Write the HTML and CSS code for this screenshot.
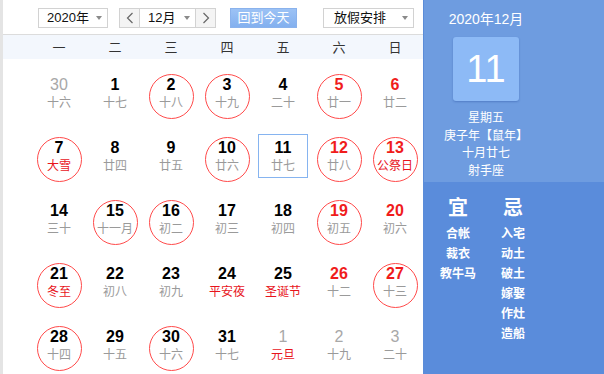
FILE: index.html
```html
<!DOCTYPE html>
<html lang="zh-CN">
<head>
<meta charset="utf-8">
<title>万年历</title>
<link rel="stylesheet" href="styles.css">
</head>
<body>
<div class="app">
  <div class="cal">
    <div class="toolbar">
      <div class="select year"><span>2020年</span><i class="caret"></i></div>
      <div class="month-group">
        <div class="nav"><svg width="8" height="12" viewBox="0 0 8 12"><polyline points="6.5,1 1.5,6 6.5,11" fill="none" stroke="#666" stroke-width="1.2"/></svg></div>
        <div class="select month"><span>12月</span><i class="caret"></i></div>
        <div class="nav"><svg width="8" height="12" viewBox="0 0 8 12"><polyline points="1.5,1 6.5,6 1.5,11" fill="none" stroke="#666" stroke-width="1.2"/></svg></div>
      </div>
      <div class="btn-today">回到今天</div>
      <div class="select holiday"><span>放假安排</span><i class="caret"></i></div>
    </div>
    <div class="week">
      <div>一</div><div>二</div><div>三</div><div>四</div><div>五</div><div>六</div><div>日</div>
    </div>
    <div class="grid">
      <div class="cell"><div class="day"><span class="num gray">30</span><span class="lunar">十六</span></div></div>
      <div class="cell"><div class="day"><span class="num">1</span><span class="lunar">十七</span></div></div>
      <div class="cell"><div class="day circle"><span class="num">2</span><span class="lunar">十八</span></div></div>
      <div class="cell"><div class="day circle"><span class="num">3</span><span class="lunar">十九</span></div></div>
      <div class="cell"><div class="day"><span class="num">4</span><span class="lunar">二十</span></div></div>
      <div class="cell"><div class="day circle"><span class="num red">5</span><span class="lunar">廿一</span></div></div>
      <div class="cell"><div class="day"><span class="num red">6</span><span class="lunar">廿二</span></div></div>

      <div class="cell"><div class="day circle"><span class="num">7</span><span class="lunar red">大雪</span></div></div>
      <div class="cell"><div class="day"><span class="num">8</span><span class="lunar">廿四</span></div></div>
      <div class="cell"><div class="day"><span class="num">9</span><span class="lunar">廿五</span></div></div>
      <div class="cell"><div class="day circle"><span class="num">10</span><span class="lunar">廿六</span></div></div>
      <div class="cell"><div class="day today"><span class="num">11</span><span class="lunar">廿七</span></div></div>
      <div class="cell"><div class="day circle"><span class="num red">12</span><span class="lunar">廿八</span></div></div>
      <div class="cell"><div class="day circle"><span class="num red">13</span><span class="lunar red">公祭日</span></div></div>

      <div class="cell"><div class="day"><span class="num">14</span><span class="lunar">三十</span></div></div>
      <div class="cell"><div class="day circle"><span class="num">15</span><span class="lunar">十一月</span></div></div>
      <div class="cell"><div class="day circle"><span class="num">16</span><span class="lunar">初二</span></div></div>
      <div class="cell"><div class="day"><span class="num">17</span><span class="lunar">初三</span></div></div>
      <div class="cell"><div class="day"><span class="num">18</span><span class="lunar">初四</span></div></div>
      <div class="cell"><div class="day circle"><span class="num red">19</span><span class="lunar">初五</span></div></div>
      <div class="cell"><div class="day"><span class="num red">20</span><span class="lunar">初六</span></div></div>

      <div class="cell"><div class="day circle"><span class="num">21</span><span class="lunar red">冬至</span></div></div>
      <div class="cell"><div class="day"><span class="num">22</span><span class="lunar">初八</span></div></div>
      <div class="cell"><div class="day"><span class="num">23</span><span class="lunar">初九</span></div></div>
      <div class="cell"><div class="day"><span class="num">24</span><span class="lunar red">平安夜</span></div></div>
      <div class="cell"><div class="day"><span class="num">25</span><span class="lunar red">圣诞节</span></div></div>
      <div class="cell"><div class="day"><span class="num red">26</span><span class="lunar">十二</span></div></div>
      <div class="cell"><div class="day circle"><span class="num red">27</span><span class="lunar">十三</span></div></div>

      <div class="cell"><div class="day circle"><span class="num">28</span><span class="lunar">十四</span></div></div>
      <div class="cell"><div class="day"><span class="num">29</span><span class="lunar">十五</span></div></div>
      <div class="cell"><div class="day circle"><span class="num">30</span><span class="lunar">十六</span></div></div>
      <div class="cell"><div class="day"><span class="num">31</span><span class="lunar">十七</span></div></div>
      <div class="cell"><div class="day"><span class="num gray">1</span><span class="lunar red">元旦</span></div></div>
      <div class="cell"><div class="day"><span class="num gray">2</span><span class="lunar">十九</span></div></div>
      <div class="cell"><div class="day"><span class="num gray">3</span><span class="lunar">二十</span></div></div>
    </div>
  </div>
  <div class="side">
    <div class="side-top">
      <div class="ym">2020年12月</div>
      <div class="bigday">11</div>
      <div class="info">
        <div>星期五</div>
        <div>庚子年【鼠年】</div>
        <div>十月廿七</div>
        <div>射手座</div>
      </div>
    </div>
    <div class="side-bottom">
      <div class="col">
        <div class="yj-title">宜</div>
        <div>合帐</div>
        <div>裁衣</div>
        <div>教牛马</div>
      </div>
      <div class="col">
        <div class="yj-title">忌</div>
        <div>入宅</div>
        <div>动土</div>
        <div>破土</div>
        <div>嫁娶</div>
        <div>作灶</div>
        <div>造船</div>
      </div>
    </div>
  </div>
</div>
</body>
</html>
```

FILE: styles.css
```css
* { box-sizing: border-box; }
html, body { margin: 0; padding: 0; }
body {
  width: 604px;
  height: 374px;
  overflow: hidden;
  background: #fff;
  font-family: "Liberation Sans", "Noto Sans CJK SC", sans-serif;
  color: #000;
}
.app {
  display: flex;
  width: 604px;
  height: 374px;
}
.cal {
  width: 423px;
  height: 374px;
  border-left: 3px solid #e4e4e4;
  display: flex;
  flex-direction: column;
}
.toolbar {
  height: 38px;
  border-bottom: 1px solid #dcdcdc;
  display: flex;
  align-items: flex-start;
  padding: 8px 0 0 35px;
  font-size: 13px;
  font-family: "Liberation Sans", "Noto Sans CJK SC", sans-serif;
}
.select {
  height: 20px;
  border: 1px solid #d2d2d2;
  background: #fff;
  display: flex;
  align-items: center;
  justify-content: space-between;
  padding: 0 5px 0 8px;
  color: #111;
}
.select span { line-height: 18px; }
.caret {
  width: 0;
  height: 0;
  border-left: 3.5px solid transparent;
  border-right: 3.5px solid transparent;
  border-top: 4px solid #8a8a8a;
}
.year { width: 70px; }
.month-group {
  display: flex;
  margin-left: 11px;
}
.nav {
  width: 21px;
  height: 20px;
  border: 1px solid #d2d2d2;
  background: #f4f4f4;
  display: flex;
  align-items: center;
  justify-content: center;
}
.month {
  width: 55px;
  border-left: none;
  border-right: none;
}
.btn-today {
  margin-left: 14px;
  width: 67px;
  height: 20px;
  line-height: 18px;
  text-align: center;
  color: #fff;
  border: 1px solid #8ab2ec;
  background: linear-gradient(#9cc2f5, #83b0ef);
}
.holiday {
  margin-left: 26px;
  width: 91px;
  padding-left: 10px;
}
.week {
  height: 24px;
  background: #f3f7fd;
  display: grid;
  grid-template-columns: repeat(7, 56px);
  padding-left: 28px;
  font-size: 13px;
  color: #333;
  font-family: "Noto Sans CJK SC", sans-serif;
}
.week div {
  text-align: center;
  line-height: 24px;
}
.grid {
  display: grid;
  grid-template-columns: repeat(7, 56px);
  grid-auto-rows: 63px;
  padding-left: 28px;
}
.cell {
  display: flex;
  flex-direction: column;
  align-items: center;
}
.day {
  margin-top: 15px;
  width: 45px;
  height: 45px;
  border: 1px solid transparent;
  border-radius: 50%;
  display: flex;
  flex-direction: column;
  align-items: center;
  padding-top: 1px;
}
.day.circle { border-color: #ff4a4a; }
.day.today {
  margin-top: 12px;
  width: 50px;
  height: 44px;
  border-radius: 0;
  border-color: #86b4f0;
  padding-top: 4px;
}
.num {
  font-family: "Liberation Sans", sans-serif;
  font-weight: bold;
  font-size: 16px;
  line-height: 18px;
  color: #000;
}
.num.red { color: #f01c1c; }
.num.gray { color: #a8a8a8; font-weight: normal; }
.lunar {
  font-family: "Noto Sans CJK SC", sans-serif;
  font-size: 12px;
  line-height: 16px;
  color: #9a9a9a;
  white-space: nowrap;
}
.lunar.red { color: #e8141c; }

.side {
  width: 181px;
  height: 374px;
  border-left: 1px solid #5b8cd8;
  display: flex;
  flex-direction: column;
  color: #fff;
  font-family: "Noto Sans CJK SC", sans-serif;
}
.side-top {
  height: 182px;
  background: #6e9ce0;
  width: 100%;
  display: flex;
  flex-direction: column;
  align-items: center;
  padding-right: 56px;
}
.ym {
  margin-top: 9px;
  font-size: 14px;
  line-height: 20px;
  font-family: "Liberation Sans", "Noto Sans CJK SC", sans-serif;
}
.bigday {
  margin-top: 8px;
  width: 66px;
  height: 64px;
  background: #8dbaf6;
  border-radius: 3px;
  box-shadow: 0 1px 2px rgba(30, 70, 150, 0.35);
  font-family: "Liberation Sans", sans-serif;
  font-size: 38px;
  line-height: 64px;
  text-align: center;
}
.info {
  margin-top: 7px;
  font-size: 12px;
  line-height: 17.5px;
  text-align: center;
}
.side-bottom {
  flex: 1;
  background: #5a8cdb;
  display: flex;
  padding: 13px 0 0 9px;
  gap: 5px;
}
.col {
  width: 50px;
  display: flex;
  flex-direction: column;
  align-items: center;
  font-size: 12px;
  font-weight: bold;
  line-height: 20px;
}
.yj-title {
  font-size: 20px;
  line-height: 24px;
  font-weight: bold;
  margin-bottom: 4px;
}
```
